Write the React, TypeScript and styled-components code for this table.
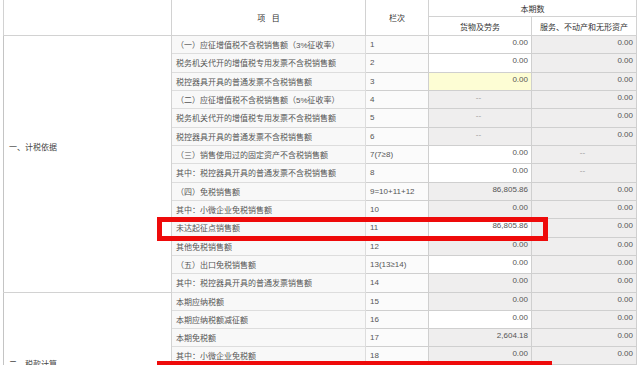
import styled, { createGlobalStyle } from "styled-components";

const GlobalStyle = createGlobalStyle`
  html, body {
    margin: 0;
    padding: 0;
    background: #ffffff;
    overflow: hidden;
  }
  body {
    font-family: "Liberation Sans", "Noto Sans CJK SC", sans-serif;
  }
`;

type Tone = "white" | "gray" | "yellow";

interface Cell {
  text: string;
  tone: Tone;
}

interface Row {
  item: string;
  no: string;
  goods: Cell;
  service: Cell;
}

const w = (text = "0.00"): Cell => ({ text, tone: "white" });
const g = (text = "0.00"): Cell => ({ text, tone: "gray" });

const basisRows: Row[] = [
  { item: "（一）应征增值税不含税销售额（3%征收率）", no: "1", goods: w(), service: g() },
  { item: " 税务机关代开的增值税专用发票不含税销售额", no: "2", goods: w(), service: g() },
  { item: "税控器具开具的普通发票不含税销售额", no: "3", goods: { text: "0.00", tone: "yellow" }, service: g() },
  { item: "（二）应征增值税不含税销售额（5%征收率）", no: "4", goods: g("--"), service: g() },
  { item: "税务机关代开的增值税专用发票不含税销售额", no: "5", goods: g("--"), service: g() },
  { item: "税控器具开具的普通发票不含税销售额", no: "6", goods: g("--"), service: g() },
  { item: "（三）销售使用过的固定资产不含税销售额", no: "7(7≥8)", goods: w(), service: g("--") },
  { item: "其中：税控器具开具的普通发票不含税销售额", no: "8", goods: w(), service: g("--") },
  { item: "（四）免税销售额", no: "9=10+11+12", goods: g("86,805.86"), service: g() },
  { item: "其中：小微企业免税销售额", no: "10", goods: g(), service: g() },
  { item: "未达起征点销售额", no: "11", goods: w("86,805.86"), service: g() },
  { item: "其他免税销售额", no: "12", goods: g(), service: g() },
  { item: "（五）出口免税销售额", no: "13(13≥14)", goods: w(), service: g() },
  { item: "其中：税控器具开具的普通发票销售额", no: "14", goods: g(), service: g() },
];

const taxRows: Row[] = [
  { item: "本期应纳税额", no: "15", goods: g(), service: g() },
  { item: "本期应纳税额减征额", no: "16", goods: w(), service: g() },
  { item: "本期免税额", no: "17", goods: g("2,604.18"), service: g() },
  { item: "其中：小微企业免税额", no: "18", goods: g(), service: g() },
];

const Page = styled.div`
  position: relative;
  width: 640px;
  height: 365px;
  overflow: hidden;
  padding-left: 3px;
  box-sizing: border-box;
`;

const Table = styled.table`
  width: 633px;
  table-layout: fixed;
  border-collapse: collapse;
  font-size: 8px;
  color: #555555;
`;

const HeadCell = styled.th<{ $h: number }>`
  height: ${(p) => p.$h}px;
  padding: 0;
  border: 1px solid #d2d2d2;
  border-top: none;
  font-weight: normal;
  color: #333333;
  text-align: center;
  vertical-align: middle;
  background: #ffffff;
  white-space: nowrap;
`;

const BodyRow = styled.tr<{ $h: number }>`
  height: ${(p) => p.$h}px;
`;

const GroupCell = styled.td<{ $shift: number }>`
  padding: 0 0 ${(p) => p.$shift}px 5px;
  border: 1px solid #d2d2d2;
  border-left-color: #c4c4c4;
  background: #ffffff;
  color: #444444;
  vertical-align: middle;
  white-space: nowrap;
`;

const ItemCell = styled.td`
  padding: 0 0 0 4px;
  border: 1px solid #dddddd;
  background: #f8f8f8;
  white-space: nowrap;
  overflow: hidden;
  color: #555555;
`;

const NoCell = styled.td`
  padding: 0 0 0 4px;
  border: 1px solid #cfcfcf;
  background: #fbfbfb;
  white-space: nowrap;
  color: #555555;
`;

const toneBg: Record<Tone, string> = {
  white: "#ffffff",
  gray: "#efeeee",
  yellow: "#fdfdd4",
};

const ValueCell = styled.td<{ $tone: Tone; $center: boolean }>`
  padding: 0 3px 4px 0;
  border: 1px solid #cfcfcf;
  background: ${(p) => toneBg[p.$tone]};
  text-align: ${(p) => (p.$center ? "center" : "right")};
  color: ${(p) => (p.$center ? "#999999" : "#555555")};
  white-space: nowrap;
`;

const Marker = styled.div<{ $top: number; $left: number; $width: number; $height: number }>`
  position: absolute;
  top: ${(p) => p.$top}px;
  left: ${(p) => p.$left}px;
  width: ${(p) => p.$width}px;
  height: ${(p) => p.$height}px;
  border: 5px solid #ee0a0a;
  box-sizing: border-box;
  pointer-events: none;
`;

function Values({ row }: { row: Row }) {
  return (
    <>
      <ValueCell $tone={row.goods.tone} $center={row.goods.text === "--"}>
        {row.goods.text}
      </ValueCell>
      <ValueCell $tone={row.service.tone} $center={row.service.text === "--"}>
        {row.service.text}
      </ValueCell>
    </>
  );
}

export default function App() {
  return (
    <>
      <GlobalStyle />
      <Page>
        <Table>
          <colgroup>
            <col style={{ width: 168 }} />
            <col style={{ width: 194 }} />
            <col style={{ width: 63 }} />
            <col style={{ width: 103 }} />
            <col style={{ width: 105 }} />
          </colgroup>
          <thead>
            <tr>
              <HeadCell $h={16} rowSpan={2} />
              <HeadCell $h={16} rowSpan={2}>
                项&nbsp;&nbsp;&nbsp;目
              </HeadCell>
              <HeadCell $h={16} rowSpan={2}>
                栏次
              </HeadCell>
              <HeadCell $h={16} colSpan={2}>
                本期数
              </HeadCell>
            </tr>
            <tr>
              <HeadCell $h={18}>货物及劳务</HeadCell>
              <HeadCell $h={18}>服务、不动产和无形资产</HeadCell>
            </tr>
          </thead>
          <tbody>
            {basisRows.map((row, i) => (
              <BodyRow key={row.no} $h={18.33}>
                {i === 0 && (
                  <GroupCell rowSpan={basisRows.length} $shift={34}>
                    一、计税依据
                  </GroupCell>
                )}
                <ItemCell>{row.item}</ItemCell>
                <NoCell>{row.no}</NoCell>
                <Values row={row} />
              </BodyRow>
            ))}
            {taxRows.map((row, i) => (
              <BodyRow key={row.no} $h={18}>
                {i === 0 && (
                  <GroupCell rowSpan={taxRows.length + 1} $shift={4}>
                    二、税款计算
                  </GroupCell>
                )}
                <ItemCell>{row.item}</ItemCell>
                <NoCell>{row.no}</NoCell>
                <Values row={row} />
              </BodyRow>
            ))}
            <BodyRow $h={74}>
              <ItemCell />
              <NoCell />
              <ValueCell $tone="gray" $center={false} />
              <ValueCell $tone="gray" $center={false} />
            </BodyRow>
          </tbody>
        </Table>
        <Marker $top={217} $left={157} $width={391} $height={24} />
        <Marker $top={361} $left={157} $width={395} $height={24} />
      </Page>
    </>
  );
}
